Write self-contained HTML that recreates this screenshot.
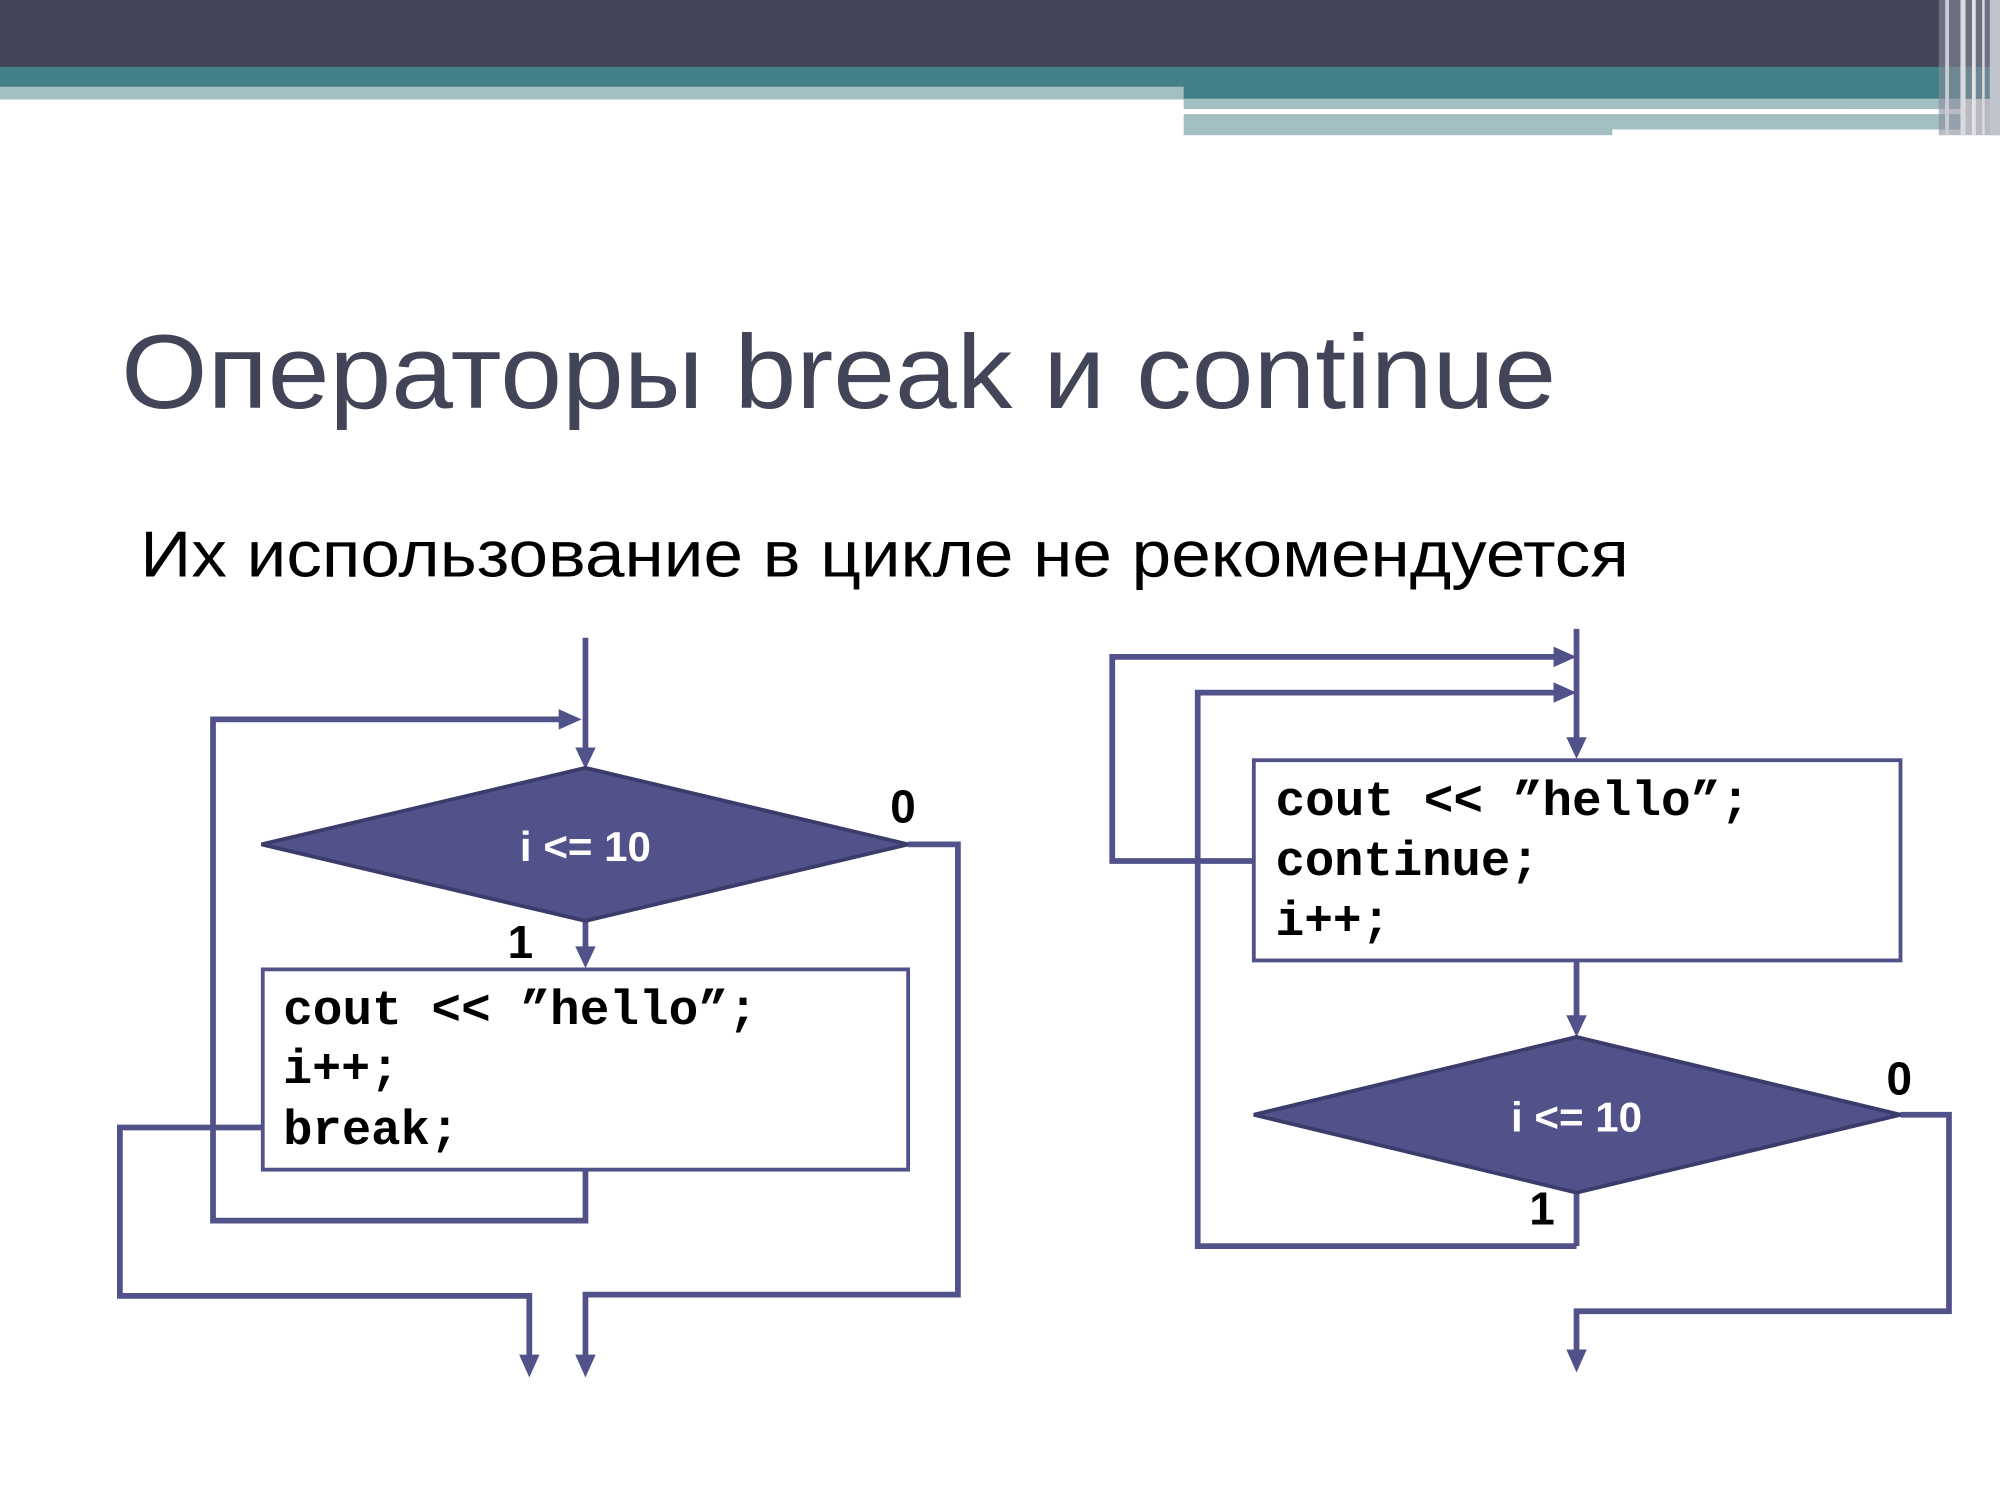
<!DOCTYPE html>
<html><head><meta charset="utf-8"><style>html,body{margin:0;padding:0;background:#fff;overflow:hidden}svg{display:block}</style></head><body>
<svg width="2000" height="1500" viewBox="0 0 1568 1176" xmlns="http://www.w3.org/2000/svg">
<rect x="0" y="0" width="1568" height="53" fill="#424457"/>
<rect x="0" y="52.5" width="1568" height="25" fill="#437f86"/>
<rect x="0" y="68" width="928" height="10" fill="#a2bfc2"/>
<rect x="928" y="77.5" width="612" height="8" fill="#a2bfc2"/>
<rect x="928" y="85.5" width="524" height="4" fill="#ffffff"/>
<rect x="928" y="89.5" width="612" height="12" fill="#a2bfc2"/>
<rect x="928" y="101" width="336" height="5" fill="#a2bfc2"/>
<rect x="1520" y="0" width="48" height="106" fill="#8a8c9c" opacity="0.6"/>
<rect x="1525" y="0" width="3" height="106" fill="#c9ccd4"/>
<rect x="1537" y="0" width="4" height="106" fill="#d8dade"/>
<rect x="1546" y="0" width="3" height="106" fill="#e0e2e6"/>
<rect x="1554" y="0" width="2" height="106" fill="#d8dade"/>
<rect x="1560" y="0" width="8" height="106" fill="#c0c4cc"/>

<text x="95" y="320" font-family="Liberation Sans, sans-serif" font-size="82" fill="#424457" textLength="1125" lengthAdjust="spacingAndGlyphs">Операторы break и continue</text>
<text x="110" y="452" font-family="Liberation Sans, sans-serif" font-size="51" fill="#000" textLength="1167" lengthAdjust="spacingAndGlyphs">Их использование в цикле не рекомендуется</text>

<g stroke="#52528a" stroke-width="4.5" fill="none" stroke-linejoin="miter">
<polyline points="459,500 459,590"/>
<polyline points="459,722 459,746"/>
<polyline points="459,917 459,957 167,957 167,564 442,564"/>
<polyline points="206,884 94,884 94,1016 415,1016 415,1066"/>
<polyline points="712,662 751,662 751,1015 459,1015 459,1066"/>
<polyline points="1236,493 1236,582"/>
<polyline points="983,675 872,675 872,515 1222,515"/>
<polyline points="1236,977 939,977 939,543 1222,543"/>
<polyline points="1236,935 1236,977"/>
<polyline points="1236,753 1236,800"/>
<polyline points="1490,874 1528,874 1528,1028 1236,1028 1236,1062"/>
</g>
<g fill="#52528a">
<polygon points="451,586 467,586 459,603"/>
<polygon points="451,742 467,742 459,759"/>
<polygon points="438,556 438,572 456,564"/>
<polygon points="407,1062 423,1062 415,1080"/>
<polygon points="451,1062 467,1062 459,1080"/>
<polygon points="1228,578 1244,578 1236,595"/>
<polygon points="1218,507 1218,523 1236,515"/>
<polygon points="1218,535 1218,551 1236,543"/>
<polygon points="1228,796 1244,796 1236,813"/>
<polygon points="1228,1058 1244,1058 1236,1076"/>
</g>
<polygon points="205,662 459,602 712,662 459,722" fill="#52528a" stroke="#3c3c6c" stroke-width="3"/>
<polygon points="983,874 1236,813 1490,874 1236,935" fill="#52528a" stroke="#3c3c6c" stroke-width="3"/>
<rect x="206" y="760" width="506" height="157" fill="#fff" stroke="#52528a" stroke-width="3"/>
<rect x="983" y="596" width="507" height="157" fill="#fff" stroke="#52528a" stroke-width="3"/>

<g font-family="Liberation Sans, sans-serif" font-weight="bold">
<text x="459" y="675" font-size="33" fill="#fff" text-anchor="middle">i &lt;= 10</text>
<text x="1236" y="887" font-size="33" fill="#fff" text-anchor="middle">i &lt;= 10</text>
<text x="708" y="645" font-size="36" fill="#000" text-anchor="middle">0</text>
<text x="408" y="751" font-size="36" fill="#000" text-anchor="middle">1</text>
<text x="1489" y="858" font-size="36" fill="#000" text-anchor="middle">0</text>
<text x="1209" y="960" font-size="36" fill="#000" text-anchor="middle">1</text>
</g>
<g font-family="Liberation Mono, monospace" font-weight="bold" font-size="38.5" fill="#000">
<text x="222" y="803" textLength="372" lengthAdjust="spacingAndGlyphs">cout &lt;&lt; ”hello”;</text>
<text x="222" y="849" textLength="91" lengthAdjust="spacingAndGlyphs">i++;</text>
<text x="222" y="897" textLength="138" lengthAdjust="spacingAndGlyphs">break;</text>
<text x="1000" y="639" textLength="372" lengthAdjust="spacingAndGlyphs">cout &lt;&lt; ”hello”;</text>
<text x="1000" y="686" textLength="207" lengthAdjust="spacingAndGlyphs">continue;</text>
<text x="1000" y="733" textLength="90" lengthAdjust="spacingAndGlyphs">i++;</text>
</g>
</svg>
</body></html>
